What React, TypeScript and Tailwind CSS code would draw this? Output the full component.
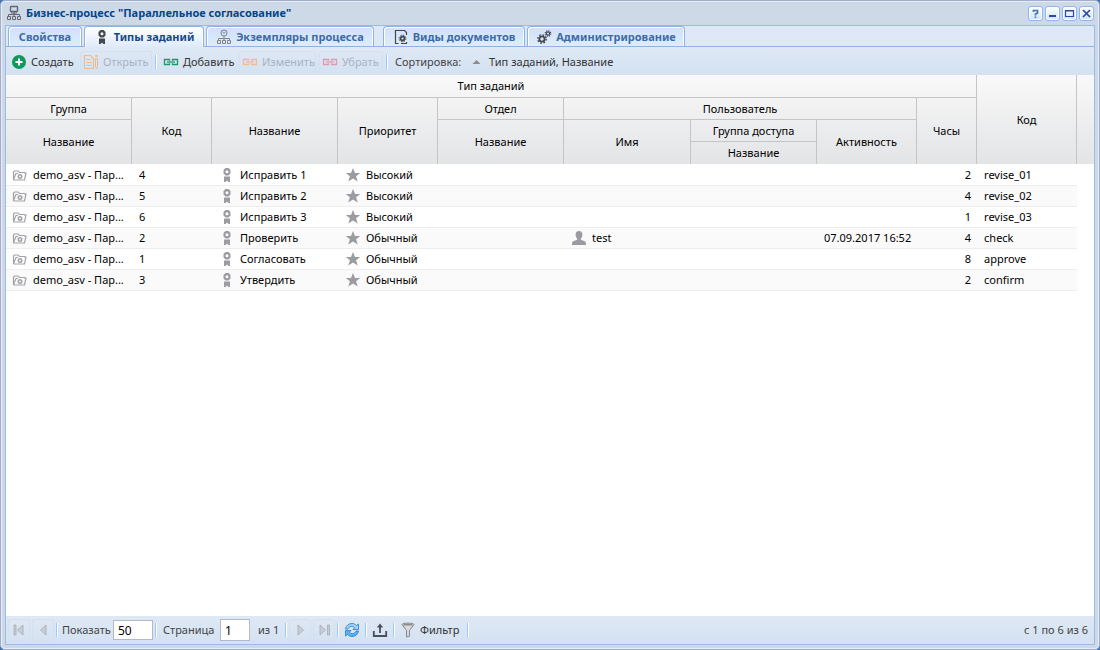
import { useState } from "react";
import type { ReactNode } from "react";

type IconProps = { className?: string };

function Svg({ children, className = "" }: { children: ReactNode; className?: string }) {
  return (
    <svg className={`w-4 h-4 flex-shrink-0 ${className}`} viewBox="0 0 16 16" fill="none" stroke="currentColor" aria-hidden="true">
      {children}
    </svg>
  );
}

function ProcessIcon({ className }: IconProps) {
  return (
    <Svg className={className}>
      <rect x="4.5" y="1.5" width="7" height="5" rx="0.5" strokeWidth="1.4" />
      <path d="M8 7v4M2.500 11V9.500h11V11M5 8h6" />
      <path d="M1.500 11.500h3v3h-3zM6.500 11.500h3v3h-3zM11.500 11.500h3v3h-3z" />
    </Svg>
  );
}

function InstanceIcon({ className }: IconProps) {
  return (
    <Svg className={className}>
      <circle cx="8" cy="4" r="3" />
      <path d="M6.500 3l1.500 1.200L9.500 3M8 7v4M2.500 11V9.500h11V11" />
      <path d="M1.500 11.500h3v3h-3zM6.500 11.500h3v3h-3zM11.500 11.500h3v3h-3z" />
    </Svg>
  );
}

function RibbonIcon({ className }: IconProps) {
  return (
    <Svg className={className}>
      <path
        d="M6.500 1h3l2 2v3.500l-2 2h-3l-2-2V3zM8 3.300a1.500 1.500 0 1 0 0 3 1.500 1.500 0 1 0 0-3z"
        fill="currentColor"
        fillRule="evenodd"
        stroke="none"
      />
      <path d="M5 9.500h6V15H9.500L8 13.500 6.500 15H5z" fill="currentColor" stroke="none" />
    </Svg>
  );
}

function DocumentGearIcon({ className }: IconProps) {
  return (
    <Svg className={className}>
      <path d="M5.500 14.500h-3v-13h9l2 2V6" strokeWidth="1.200" />
      <path d="M8 14.500h5.500V13" strokeWidth="1.200" />
      <circle cx="9.500" cy="9.500" r="2" strokeWidth="1.800" />
      <circle cx="9.500" cy="9.500" r="3.400" strokeWidth="1" strokeDasharray="1.335 1.335" />
    </Svg>
  );
}

function GearsIcon({ className }: IconProps) {
  return (
    <Svg className={className}>
      <circle cx="6" cy="10" r="2.600" strokeWidth="1.800" />
      <circle cx="6" cy="10" r="4.200" strokeWidth="1.400" strokeDasharray="1.650 1.650" />
      <circle cx="12" cy="4.500" r="1.600" strokeWidth="1.200" />
      <circle cx="12" cy="4.500" r="2.700" strokeWidth="1.200" strokeDasharray="1.060 1.060" />
    </Svg>
  );
}

function PlusIcon() {
  return (
    <Svg className="text-[#0d9a5c]">
      <circle cx="8" cy="8" r="7" fill="currentColor" stroke="none" />
      <path d="M8 4.500v7M4.500 8h7" stroke="#fff" strokeWidth="2" />
    </Svg>
  );
}

function OpenIcon() {
  return (
    <Svg className="text-[#efbd8c]">
      <path d="M1.500 1.500h6l3 3v10h-9zM3.500 5.500h4M3.500 8.500h5M3.500 11.500h5" strokeWidth="1.200" />
      <path d="M12.500 4.500h2v8l-1 2-1-2zM12.500 1.500h2v1h-2z" />
    </Svg>
  );
}

function LinkIcon({ className }: IconProps) {
  return (
    <Svg className={className}>
      <path d="M6.500 6.800V5.500h-5v5h5V9.200M9.500 6.800V5.500h5v5h-5V9.200" strokeWidth="1.300" />
      <path d="M4 8h8" strokeWidth="1.300" />
    </Svg>
  );
}

function FolderIcon() {
  return (
    <Svg className="text-[#a2a3a8]">
      <path d="M12.500 6V5.500H7.500L6 4H2.500l-1 1v7.500l.5.500h10.500l1.500-7h-2" strokeWidth="1.200" />
      <path d="M1.500 12.500L4 6.500h2" strokeWidth="1.200" />
      <circle cx="8" cy="9.500" r="1.700" strokeWidth="1.600" />
    </Svg>
  );
}

function StarIcon() {
  return (
    <Svg className="text-[#9b9ca2]">
      <path d="M8 1l2 5h5.200l-4.100 3.300 1.600 5.200L8 11.400l-4.700 3.100 1.600-5.200L.8 6H6z" fill="currentColor" stroke="none" />
    </Svg>
  );
}

function UserIcon() {
  return (
    <Svg className="text-[#9b9ca2]">
      <path d="M8 1c2.300 0 3.400 1.500 3.400 3.600 0 1.900-.7 3.300-1.600 4.100v1.100l4 1.500c.9.400 1.200 1.200 1.200 3.700H1c0-2.500.3-3.300 1.200-3.700l4-1.500V8.700c-.9-.8-1.600-2.200-1.600-4.100C4.600 2.500 5.700 1 8 1z" fill="currentColor" stroke="none" />
    </Svg>
  );
}

function PagerIcon({ kind }: { kind: "first" | "prev" | "next" | "last" }) {
  const paths = {
    first: "M3 3h2v10H3zM12 3v10L6.500 8z",
    prev: "M11 3v10L5.500 8z",
    next: "M6 3v10l5.500-5z",
    last: "M4 3v10l5.500-5zM11.500 3h2v10h-2z",
  };
  return (
    <Svg className="text-[#a4abb3]">
      <path d={paths[kind]} fill="#c9ced4" strokeWidth="0.800" />
    </Svg>
  );
}

function RefreshIcon() {
  return (
    <Svg className="text-[#2f86d6]">
      <path d="M1.500 7C2 3.500 5 1.500 8 1.500c2 0 3.500.8 4.500 2L14.500 2v5.500H9l1.700-1.800C8.500 3.500 5 4 4 7z" fill="#a5d4f8" strokeWidth="0.900" />
      <path d="M14.500 9c-.5 3.500-3.500 5.500-6.500 5.500-2 0-3.500-.8-4.500-2L1.500 14V8.500H7l-1.700 1.800C7.500 12.500 11 12 12 9z" fill="#5eb0ee" strokeWidth="0.900" />
    </Svg>
  );
}

function ExportIcon() {
  return (
    <Svg className="text-[#4b4f5c]">
      <path d="M1.800 9v5h12.400V9M8 11V4" strokeWidth="1.800" />
      <path d="M8 1.500l3.200 3.900H4.800z" fill="currentColor" stroke="none" />
    </Svg>
  );
}

function FilterIcon() {
  return (
    <Svg className="text-[#85878a]">
      <path d="M2 2.500c0-1.800 12-1.800 12 0L9.500 8.500v5.700L6.500 15V8.500z" fill="#d9dadc" />
      <path d="M3.500 2.800h9" strokeWidth="1.400" />
    </Svg>
  );
}

const TABS = [
  { label: "Свойства", icon: null, className: "w-[74px]" },
  { label: "Типы заданий", icon: <RibbonIcon className="text-[#45474f]" />, className: "w-[120px]" },
  { label: "Экземпляры процесса", icon: <InstanceIcon className="text-[#7e838d]" />, className: "w-[168px] mr-[7px]" },
  { label: "Виды документов", icon: <DocumentGearIcon className="text-[#45474f]" />, className: "w-[142px]" },
  { label: "Администрирование", icon: <GearsIcon className="text-[#45474f]" />, className: "w-[158px]" },
];

const ROWS = [
  { code: "4", name: "Исправить 1", priority: "Высокий", user: "", active: "", hours: 2, key: "revise_01" },
  { code: "5", name: "Исправить 2", priority: "Высокий", user: "", active: "", hours: 4, key: "revise_02" },
  { code: "6", name: "Исправить 3", priority: "Высокий", user: "", active: "", hours: 1, key: "revise_03" },
  { code: "2", name: "Проверить", priority: "Обычный", user: "test", active: "07.09.2017 16:52", hours: 4, key: "check" },
  { code: "1", name: "Согласовать", priority: "Обычный", user: "", active: "", hours: 8, key: "approve" },
  { code: "3", name: "Утвердить", priority: "Обычный", user: "", active: "", hours: 2, key: "confirm" },
];

function Separator() {
  return <span className="w-0.5 h-3.5 flex-shrink-0 bg-[#98c8ff] border-r border-white" />;
}

function ToolButton({ label, children }: { label: string; children: ReactNode }) {
  return (
    <button
      aria-label={label}
      className="w-[15px] h-[15px] rounded-[3px] border border-[#8fb6e8] bg-linear-to-b from-white to-[#cfe3fb] text-[#2b4a9b] flex items-center justify-center shadow-[inset_0_0_0_1px_#fff]"
    >
      <svg className="w-[13px] h-[13px]" viewBox="0 0 13 13" fill="none" stroke="currentColor" aria-hidden="true">
        {children}
      </svg>
    </button>
  );
}

function BarButton({
  icon,
  label,
  className,
  disabled,
}: {
  icon: ReactNode;
  label: string;
  className: string;
  disabled?: boolean;
}) {
  return (
    <button
      disabled={disabled}
      className={`h-[22px] px-0.5 flex items-center gap-1 rounded-[3px] border border-transparent text-[#333] whitespace-nowrap disabled:text-[#a9b2be] disabled:border-[#d6e0ec] ${className}`}
    >
      {icon}
      {label}
    </button>
  );
}

function PagerButton({ label, disabled, children }: { label: string; disabled?: boolean; children: ReactNode }) {
  return (
    <button
      aria-label={label}
      disabled={disabled}
      className="w-[22px] h-[22px] flex-shrink-0 flex items-center justify-center rounded-[3px] border border-transparent disabled:border-[#d6e0ec]"
    >
      {children}
    </button>
  );
}

function Th({
  children,
  cols,
  rows,
  last,
}: {
  children?: ReactNode;
  cols?: number;
  rows?: number;
  last?: boolean;
}) {
  return (
    <th
      colSpan={cols}
      rowSpan={rows}
      className={`p-0 font-normal align-middle border-r border-[#c5c5c5] ${last ? "" : "border-b"}`}
    >
      {children}
    </th>
  );
}

function IconCell({ icon, children }: { icon: ReactNode; children: ReactNode }) {
  return (
    <div className="flex items-center gap-[5px] whitespace-nowrap">
      {icon}
      <span>{children}</span>
    </div>
  );
}

function TaskTable() {
  return (
    <table className="w-full table-fixed border-separate border-spacing-0 text-black">
      <colgroup>
        <col className="w-[126px]" />
        <col className="w-[80px]" />
        <col className="w-[126px]" />
        <col className="w-[100px]" />
        <col className="w-[126px]" />
        <col className="w-[127px]" />
        <col className="w-[126px]" />
        <col className="w-[100px]" />
        <col className="w-[60px]" />
        <col className="w-[100px]" />
        <col />
      </colgroup>
      <thead className="bg-linear-to-b from-[#f9f9f9] to-[#e3e4e6]">
        <tr className="h-[23px]">
          <Th cols={9}>Тип заданий</Th>
          <Th rows={4} last>Код</Th>
          <td rowSpan={4} />
        </tr>
        <tr className="h-[22px]">
          <Th>Группа</Th>
          <Th rows={3} last>Код</Th>
          <Th rows={3} last>Название</Th>
          <Th rows={3} last>Приоритет</Th>
          <Th>Отдел</Th>
          <Th cols={3}>Пользователь</Th>
          <Th rows={3} last>Часы</Th>
        </tr>
        <tr className="h-[22px]">
          <Th rows={2} last>Название</Th>
          <Th rows={2} last>Название</Th>
          <Th rows={2} last>Имя</Th>
          <Th>Группа доступа</Th>
          <Th rows={2} last>Активность</Th>
        </tr>
        <tr className="h-[22px]">
          <Th last>Название</Th>
        </tr>
      </thead>
      <tbody>
        {ROWS.map((row) => (
          <tr
            key={row.key}
            className="h-[21px] first:h-[22px] first:*:border-t first:*:border-t-white even:*:bg-[#fafafa] *:border-b *:border-b-[#ededed] *:pl-[7px] *:pr-1.5 *:py-0 *:first:pl-1.5 *:last:border-0 *:last:bg-transparent!"
          >
            <td>
              <IconCell icon={<FolderIcon />}>demo_asv - Пар...</IconCell>
            </td>
            <td>{row.code}</td>
            <td>
              <IconCell icon={<RibbonIcon className="text-[#9b9ca2]" />}>{row.name}</IconCell>
            </td>
            <td>
              <IconCell icon={<StarIcon />}>{row.priority}</IconCell>
            </td>
            <td />
            <td>{row.user && <IconCell icon={<UserIcon />}>{row.user}</IconCell>}</td>
            <td />
            <td className="whitespace-nowrap">{row.active}</td>
            <td className="text-right">{row.hours}</td>
            <td>{row.key}</td>
            <td />
          </tr>
        ))}
      </tbody>
    </table>
  );
}

function Pager() {
  const [pageSize, setPageSize] = useState("50");
  const [page, setPage] = useState("1");

  return (
    <footer className="h-7 px-0.5 flex items-center gap-0.5 bg-linear-to-b from-[#dfe9f5] to-[#d3e1f1] text-[#444]">
      <PagerButton label="Первая страница" disabled><PagerIcon kind="first" /></PagerButton>
      <PagerButton label="Предыдущая страница" disabled><PagerIcon kind="prev" /></PagerButton>
      <Separator />
      <label htmlFor="page-size" className="w-[51px] pl-0.5">Показать</label>
      <input
        id="page-size"
        value={pageSize}
        onChange={(e) => setPageSize(e.target.value)}
        className="w-10 h-5 px-1 border border-[#b5b8c8] bg-white text-xs text-black"
      />
      <Separator />
      <label htmlFor="page" className="w-[59px] pl-1">Страница</label>
      <input
        id="page"
        value={page}
        onChange={(e) => setPage(e.target.value)}
        className="w-[30px] h-[22px] px-1 border border-[#b5b8c8] bg-white text-xs text-black"
      />
      <span className="w-[31px] pl-1.5 whitespace-nowrap">из 1</span>
      <Separator />
      <PagerButton label="Следующая страница" disabled><PagerIcon kind="next" /></PagerButton>
      <PagerButton label="Последняя страница" disabled><PagerIcon kind="last" /></PagerButton>
      <Separator />
      <PagerButton label="Обновить"><RefreshIcon /></PagerButton>
      <Separator />
      <PagerButton label="Выгрузить"><ExportIcon /></PagerButton>
      <Separator />
      <BarButton icon={<FilterIcon />} label="Фильтр" className="w-[68px]" />
      <Separator />
      <span className="ml-auto pr-1">с 1 по 6 из 6</span>
    </footer>
  );
}

export default function App() {
  const [active, setActive] = useState(1);

  return (
    <div className="h-screen bg-[#3f78b8] font-['Noto_Sans',sans-serif] text-[11px] leading-4">
      <div className="h-full flex flex-col rounded-[5px] border border-[#a2aec9] bg-[#ced9e7] px-1 pb-1 shadow-[inset_0_0_0_1px_#e6edf6]">
        <header className="h-6 flex items-center gap-1 px-px">
          <ProcessIcon className="text-[#63676f]" />
          <h1 className="flex-1 font-bold text-[#04468c]">Бизнес-процесс "Параллельное согласование"</h1>
          <div className="flex gap-0.5">
            <ToolButton label="Справка">
              <path d="M4.500 5V3.500h4V6L6.500 7v1.500M6.500 9.500V11" stroke="#4674a8" strokeWidth="1.700" />
            </ToolButton>
            <ToolButton label="Свернуть">
              <path d="M3 9h7" strokeWidth="2" />
            </ToolButton>
            <ToolButton label="Развернуть">
              <path d="M2.500 3.500h8v6h-8zM2.500 4h8" strokeWidth="1.200" />
            </ToolButton>
            <ToolButton label="Закрыть">
              <path d="M3 3l7 7M10 3l-7 7" strokeWidth="1.700" />
            </ToolButton>
          </div>
        </header>

        <main className="flex-1 min-h-0 flex flex-col border border-[#99bbe8] bg-white">
          <div role="tablist" className="h-[21px] flex items-end gap-0.5 px-0.5 bg-[#dee8f6] border-b border-[#8db2e3]">
            {TABS.map((tab, i) => (
              <button
                key={tab.label}
                role="tab"
                aria-selected={i === active}
                onClick={() => setActive(i)}
                className={`flex items-center justify-center gap-1 rounded-t-[4px] border border-b-0 border-[#8db2e3] font-bold whitespace-nowrap shadow-[inset_1px_1px_0_#fff,inset_-1px_0_0_#fff] ${tab.className} ${
                  i === active
                    ? "h-[21px] -mb-px bg-linear-to-b from-white to-[#dfeafa] text-[#15498b]"
                    : "h-5 bg-linear-to-b from-[#cfe0f8] to-[#deecfd] text-[#416aa3]"
                }`}
              >
                {tab.icon}
                {tab.label}
              </button>
            ))}
          </div>

          <div role="toolbar" className="h-7 px-0.5 pt-0.5 flex items-center gap-[3px] bg-linear-to-b from-[#dfe9f5] to-[#d3e1f1]">
            <BarButton icon={<PlusIcon />} label="Создать" className="w-[69px]" />
            <BarButton icon={<OpenIcon />} label="Открыть" className="w-[72px]" disabled />
            <Separator />
            <BarButton icon={<LinkIcon className="text-[#1a9a68]" />} label="Добавить" className="w-[76px]" />
            <BarButton icon={<LinkIcon className="text-[#efbd8c]" />} label="Изменить" className="w-[77px]" disabled />
            <BarButton icon={<LinkIcon className="text-[#dc9dae]" />} label="Убрать" className="w-[64px]" disabled />
            <Separator />
            <span className="w-[72px] pl-1 text-[#444]">Сортировка:</span>
            <BarButton
              icon={
                <Svg className="text-[#8b8b8b]">
                  <path d="M3.500 10L7.500 6l4 4z" fill="currentColor" stroke="none" />
                </Svg>
              }
              label="Тип заданий, Название"
              className=""
            />
          </div>

          <div className="flex-1 min-h-0 overflow-hidden">
            <TaskTable />
          </div>

          <Pager />
        </main>
      </div>
    </div>
  );
}
